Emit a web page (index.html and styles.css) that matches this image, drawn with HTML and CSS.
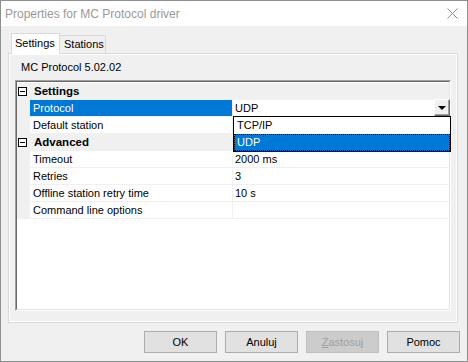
FILE: index.html
```html
<!DOCTYPE html>
<html lang="pl">
<head>
    <meta charset="UTF-8">
    <title>Properties for MC Protocol driver</title>
    <link rel="stylesheet" href="styles.css">
</head>
<body>
    <div class="window">
        <div class="titlebar">
            <span class="title">Properties for MC Protocol driver</span>
            <svg class="close" width="11" height="11" viewBox="0 0 11 11">
                <path d="M0.5 0.5 L10.5 10.5 M10.5 0.5 L0.5 10.5" stroke="#8a8a8a" stroke-width="1" fill="none"/>
            </svg>
        </div>

        <div class="tabs">
            <div class="tab active">Settings</div>
            <div class="tab">Stations</div>
        </div>

        <div class="panel">
            <div class="version">MC Protocol 5.02.02</div>

            <div class="grid">
                <div class="grid-inner">
                    <div class="row category">
                        <div class="margin"><span class="toggle"></span></div>
                        <div class="name">Settings</div>
                        <div class="value"></div>
                    </div>
                    <div class="row">
                        <div class="margin"></div>
                        <div class="name selected">Protocol</div>
                        <div class="value">UDP</div>
                    </div>
                    <div class="row">
                        <div class="margin"></div>
                        <div class="name">Default station</div>
                        <div class="value"></div>
                    </div>
                    <div class="row category">
                        <div class="margin"><span class="toggle"></span></div>
                        <div class="name">Advanced</div>
                        <div class="value"></div>
                    </div>
                    <div class="row">
                        <div class="margin"></div>
                        <div class="name">Timeout</div>
                        <div class="value">2000 ms</div>
                    </div>
                    <div class="row">
                        <div class="margin"></div>
                        <div class="name">Retries</div>
                        <div class="value">3</div>
                    </div>
                    <div class="row">
                        <div class="margin"></div>
                        <div class="name">Offline station retry time</div>
                        <div class="value">10 s</div>
                    </div>
                    <div class="row">
                        <div class="margin"></div>
                        <div class="name">Command line options</div>
                        <div class="value"></div>
                    </div>
                </div>

                <!-- combo aperto sopra la griglia -->
                <div class="combo-button"><span class="arrow"></span></div>
                <div class="dropdown">
                    <div class="option">TCP/IP</div>
                    <div class="option current">UDP</div>
                </div>
            </div>
        </div>

        <div class="buttons">
            <button class="btn">OK</button>
            <button class="btn">Anuluj</button>
            <button class="btn" disabled><u>Z</u>astosuj</button>
            <button class="btn">Pomoc</button>
        </div>
    </div>
</body>
</html>
```

FILE: styles.css
```css
body {
    margin: 0;
    font-family: 'Liberation Sans', Arial, sans-serif;
    font-size: 11px;
    color: #000;
}
.window {
    width: 468px;
    height: 362px;
    box-sizing: border-box;
    border: 1px solid #8f8f8f;
    background-color: #f0f0f0;
    display: flex;
    flex-direction: column;
}
.titlebar {
    height: 25px;
    background-color: #fff;
    display: flex;
    align-items: center;
    padding-left: 4px;
    color: #999;
    font-size: 12px;
}
.close {
    margin-left: auto;
    margin-right: 9px;
}
.tabs {
    display: flex;
    align-items: flex-end;
    margin: 7px 0 0 10px;
    height: 20px;
    position: relative;
    z-index: 1;
}
.tab {
    box-sizing: border-box;
    height: 18px;
    width: 46px;
    padding-left: 4px;
    border: 1px solid #d9d9d9;
    border-bottom: none;
    border-left: none;
    background-color: #f0f0f0;
    line-height: 17px;
}
.tab.active {
    height: 21px;
    width: 49px;
    margin-bottom: -1px;
    border-left: 1px solid #d9d9d9;
    background-color: #fff;
    padding-left: 3px;
    line-height: 19px;
}
.panel {
    box-sizing: border-box;
    width: 450px;
    height: 270px;
    margin-left: 7px;
    border: 1px solid #d9d9d9;
    box-shadow: inset 1px 1px 0 #fff, inset -1px -1px 0 #fff;
}
.version {
    padding: 5px 0 0 12px;
    line-height: 16px;
}
.grid {
    position: relative;
    box-sizing: border-box;
    width: 436px;
    height: 231px;
    margin: 5px 0 0 6px;
    border: 1px solid;
    border-color: #a0a0a0 #fff #fff #a0a0a0;
}
.grid-inner {
    box-sizing: border-box;
    height: 100%;
    padding-top: 1px;
    border: 1px solid;
    border-color: #696969 #e3e3e3 #e3e3e3 #696969;
    background-color: #fff;
}
.row {
    display: grid;
    grid-template-columns: 13px 203px 1fr;
    height: 17px;
    box-sizing: border-box;
    border-bottom: 1px solid #f0f0f0;
    line-height: 16px;
}
.margin {
    background-color: #f0f0f0;
    position: relative;
}
.name {
    padding-left: 3px;
    border-right: 1px solid #f0f0f0;
    white-space: nowrap;
}
.value {
    padding-left: 2px;
}
.name.selected {
    background-color: #0078d7;
    color: #fff;
}
.row.category {
    background-color: #f0f0f0;
    font-weight: bold;
    font-size: 11.5px;
}
.row.category .name {
    padding-left: 4px;
    border-right: none;
}
.toggle {
    position: absolute;
    left: 1px;
    top: 4px;
    width: 9px;
    height: 9px;
    box-sizing: border-box;
    border: 1px solid #000;
    background-color: #fff;
}
.toggle::after {
    content: '';
    position: absolute;
    left: 1px;
    top: 3px;
    width: 5px;
    height: 1px;
    background-color: #000;
}
.combo-button {
    position: absolute;
    left: 418px;
    top: 18px;
    width: 16px;
    height: 17px;
    box-sizing: border-box;
    border: 1px solid;
    border-color: #fff #696969 #696969 #fff;
    box-shadow: inset -1px -1px 0 #a0a0a0;
    background-color: #f0f0f0;
}
.arrow {
    position: absolute;
    left: 3px;
    top: 6px;
    width: 0;
    height: 0;
    border-left: 4px solid transparent;
    border-right: 4px solid transparent;
    border-top: 4px solid #000;
}
.dropdown {
    position: absolute;
    left: 217px;
    top: 35px;
    width: 218px;
    box-sizing: border-box;
    border: 1px solid #000;
    background-color: #fff;
}
.option {
    height: 17px;
    line-height: 17px;
    padding-left: 3px;
    box-sizing: border-box;
}
.option.current {
    background-color: #0078d7;
    color: #fff;
    border: 1px dotted #000;
    line-height: 15px;
    padding-left: 2px;
}
.buttons {
    display: flex;
    justify-content: flex-end;
    gap: 8px;
    margin-top: 8px;
    padding-right: 7px;
}
.btn {
    width: 73px;
    height: 22px;
    box-sizing: border-box;
    border: 1px solid #adadad;
    background-color: #e1e1e1;
    font-family: 'Liberation Sans', Arial, sans-serif;
    font-size: 11px;
    color: #000;
    padding: 0;
}
.btn:disabled {
    background-color: #cccccc;
    border-color: #bfbfbf;
    color: #a0a0a0;
}
```
